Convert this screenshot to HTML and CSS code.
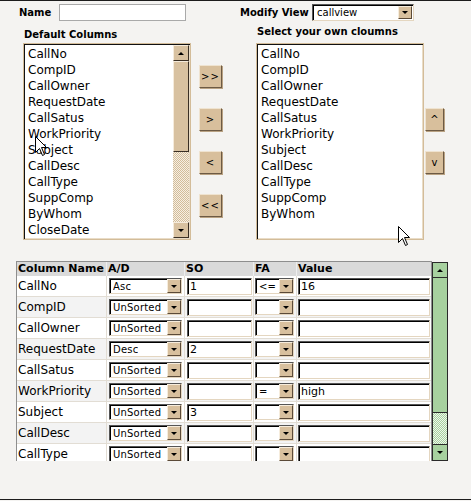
FILE: index.html
```html
<!DOCTYPE html>
<html lang="en">
<head>
  <meta charset="UTF-8">
  <title>Modify View</title>
  <link rel="stylesheet" href="styles.css">
</head>
<body>
<div class="frame">

  <!-- name + view picker -->
  <div class="topbar">
    <span class="lbl name-lbl">Name</span>
    <input class="name-field" type="text">
    <span class="lbl view-lbl">Modify View</span>
    <div class="combo"><span>callview</span><i class="drop"><b class="tri-down"></b></i></div>
  </div>

  <!-- column pickers -->
  <div class="pickers">
    <div class="picker">
      <div class="lbl plabel">Default Columns</div>
      <div class="listbox">
        <ul class="items">
          <li>CallNo</li><li>CompID</li><li>CallOwner</li><li>RequestDate</li>
          <li>CallSatus</li><li>WorkPriority</li><li>Subject</li><li>CallDesc</li>
          <li>CallType</li><li>SuppComp</li><li>ByWhom</li><li>CloseDate</li>
        </ul>
        <div class="vscroll">
          <div class="sbtn"><b class="tri-up"></b></div>
          <div class="thumb"></div>
          <div class="track"></div>
          <div class="sbtn"><b class="tri-down"></b></div>
        </div>
      </div>
    </div>

    <div class="movebtns">
      <button class="tbtn">&gt;&gt;</button>
      <button class="tbtn">&gt;</button>
      <button class="tbtn">&lt;</button>
      <button class="tbtn">&lt;&lt;</button>
    </div>

    <div class="picker own">
      <div class="lbl plabel">Select your own cloumns</div>
      <div class="listbox">
        <ul class="items">
          <li>CallNo</li><li>CompID</li><li>CallOwner</li><li>RequestDate</li>
          <li>CallSatus</li><li>WorkPriority</li><li>Subject</li><li>CallDesc</li>
          <li>CallType</li><li>SuppComp</li><li>ByWhom</li>
        </ul>
      </div>
    </div>

    <div class="orderbtns">
      <button class="tbtn small">^</button>
      <button class="tbtn small">v</button>
    </div>
  </div>

  <!-- sort / filter grid -->
  <div class="grid-wrap">
    <div class="grid-clip">
      <div class="grid">
        <div class="hd">Column Name</div><div class="hd">A/D</div><div class="hd">SO</div><div class="hd">FA</div><div class="hd last">Value</div>

        <div class="c name">CallNo</div>
        <div class="c ad"><div class="sel"><span>Asc</span><i class="drop"><b class="tri-down"></b></i></div></div>
        <div class="c so"><div class="inp">1</div></div>
        <div class="c fa"><div class="sel"><span>&lt;=</span><i class="drop"><b class="tri-down"></b></i></div></div>
        <div class="c val last"><div class="inp">16</div></div>

        <div class="c name alt">CompID</div>
        <div class="c ad alt"><div class="sel"><span>UnSorted</span><i class="drop"><b class="tri-down"></b></i></div></div>
        <div class="c so alt"><div class="inp"></div></div>
        <div class="c fa alt"><div class="sel"><span></span><i class="drop"><b class="tri-down"></b></i></div></div>
        <div class="c val alt last"><div class="inp"></div></div>

        <div class="c name">CallOwner</div>
        <div class="c ad"><div class="sel"><span>UnSorted</span><i class="drop"><b class="tri-down"></b></i></div></div>
        <div class="c so"><div class="inp"></div></div>
        <div class="c fa"><div class="sel"><span></span><i class="drop"><b class="tri-down"></b></i></div></div>
        <div class="c val last"><div class="inp"></div></div>

        <div class="c name alt">RequestDate</div>
        <div class="c ad alt"><div class="sel"><span>Desc</span><i class="drop"><b class="tri-down"></b></i></div></div>
        <div class="c so alt"><div class="inp">2</div></div>
        <div class="c fa alt"><div class="sel"><span></span><i class="drop"><b class="tri-down"></b></i></div></div>
        <div class="c val alt last"><div class="inp"></div></div>

        <div class="c name">CallSatus</div>
        <div class="c ad"><div class="sel"><span>UnSorted</span><i class="drop"><b class="tri-down"></b></i></div></div>
        <div class="c so"><div class="inp"></div></div>
        <div class="c fa"><div class="sel"><span></span><i class="drop"><b class="tri-down"></b></i></div></div>
        <div class="c val last"><div class="inp"></div></div>

        <div class="c name alt">WorkPriority</div>
        <div class="c ad alt"><div class="sel"><span>UnSorted</span><i class="drop"><b class="tri-down"></b></i></div></div>
        <div class="c so alt"><div class="inp"></div></div>
        <div class="c fa alt"><div class="sel"><span>=</span><i class="drop"><b class="tri-down"></b></i></div></div>
        <div class="c val alt last"><div class="inp">high</div></div>

        <div class="c name">Subject</div>
        <div class="c ad"><div class="sel"><span>UnSorted</span><i class="drop"><b class="tri-down"></b></i></div></div>
        <div class="c so"><div class="inp">3</div></div>
        <div class="c fa"><div class="sel"><span></span><i class="drop"><b class="tri-down"></b></i></div></div>
        <div class="c val last"><div class="inp"></div></div>

        <div class="c name alt">CallDesc</div>
        <div class="c ad alt"><div class="sel"><span>UnSorted</span><i class="drop"><b class="tri-down"></b></i></div></div>
        <div class="c so alt"><div class="inp"></div></div>
        <div class="c fa alt"><div class="sel"><span></span><i class="drop"><b class="tri-down"></b></i></div></div>
        <div class="c val alt last"><div class="inp"></div></div>

        <div class="c name">CallType</div>
        <div class="c ad"><div class="sel"><span>UnSorted</span><i class="drop"><b class="tri-down"></b></i></div></div>
        <div class="c so"><div class="inp"></div></div>
        <div class="c fa"><div class="sel"><span></span><i class="drop"><b class="tri-down"></b></i></div></div>
        <div class="c val last"><div class="inp"></div></div>
      </div>
    </div>
    <div class="gscroll">
      <div class="gbtn"><b class="tri-up"></b></div>
      <div class="gthumb"></div>
      <div class="gtrack"></div>
      <div class="gbtn down"><b class="tri-down"></b></div>
    </div>
  </div>

  <!-- mouse pointers caught in the shot -->
  <svg class="cursor cur-left" width="13" height="21" viewBox="0 0 13 21"><path d="M0.5 0.5 L0.5 16.5 L4.5 12.5 L7.5 19.5 L9.5 18.5 L6.5 11.5 L11.5 11.5 Z" fill="#fff" stroke="#000"/></svg>
  <svg class="cursor cur-right" width="13" height="21" viewBox="0 0 13 21"><path d="M0.5 0.5 L0.5 16.5 L4.5 12.5 L7.5 19.5 L9.5 18.5 L6.5 11.5 L11.5 11.5 Z" fill="#fff" stroke="#000"/></svg>
</div>
</body>
</html>
```

FILE: styles.css
```css
* {
  box-sizing: border-box;
}

body {
  margin: 0;
  background: #f4f3f1;
  font-family: "DejaVu Sans", Verdana, sans-serif;
  color: #000;
}

.frame {
  position: relative;
  height: 500px;
  border-top: 1px solid #1c1c1c;
  border-bottom: 1px solid #1c1c1c;
}

.lbl {
  font-size: 10px;
  font-weight: bold;
}

/* top row */
.topbar {
  display: flex;
  align-items: center;
  height: 17px;
  margin-top: 3px;
  padding-left: 19px;
}

.name-lbl {
  width: 40px;
}

.name-field {
  width: 127px;
  height: 17px;
  margin: 0;
  padding: 0;
  border: 1px solid #a9a9a9;
  background: #fff;
}

.view-lbl {
  width: 72px;
  margin-left: 54px;
}

.combo {
  display: flex;
  align-items: center;
  justify-content: space-between;
  width: 102px;
  height: 17px;
  padding: 0 1px 0 4px;
  background: #fff;
  border: 1px solid;
  border-color: #555 #e4d6c0 #e4d6c0 #555;
  box-shadow: inset 1px 1px 0 #000;
  font-size: 10px;
}

/* small triangles */
.tri-down, .tri-up {
  display: block;
  width: 0;
  height: 0;
  border-left: 3px solid transparent;
  border-right: 3px solid transparent;
}

.tri-down {
  border-top: 3px solid #000;
}

.tri-up {
  border-bottom: 3px solid #000;
}

.drop {
  display: flex;
  flex-shrink: 0;
  align-items: center;
  justify-content: center;
  width: 14px;
  height: 13px;
  background: #d8c09e;
  border: 1px solid;
  border-color: #f6ecdc #5b4a38 #5b4a38 #f6ecdc;
}

/* pickers */
.pickers {
  display: flex;
  align-items: flex-start;
  margin-top: 4px;
  padding-left: 23px;
}

.plabel {
  height: 18px;
  padding-top: 4px;
  padding-left: 1px;
}

.own .plabel {
  padding-top: 1px;
}

.listbox {
  display: flex;
  width: 168px;
  height: 197px;
  padding: 1px;
  background: #fff;
  border: 1px solid #d3bc99;
  box-shadow: inset 1px 1px 0 #111, inset -1px -1px 0 #e9dcc7;
}

.items {
  flex: 1;
  margin: 0;
  padding: 1px 0 0 3px;
  list-style: none;
  font-size: 12px;
  line-height: 16px;
  overflow: hidden;
}

.vscroll {
  display: flex;
  flex-direction: column;
  width: 16px;
}

.sbtn, .thumb {
  display: flex;
  align-items: center;
  justify-content: center;
  background: #d8c1a0;
  border: 1px solid;
  border-color: #f5ebdc #3a2f24 #3a2f24 #f5ebdc;
}

.sbtn {
  height: 16px;
}

.thumb {
  height: 91px;
}

.track {
  flex: 1;
  background: repeating-conic-gradient(#d3bc99 0 25%, #f6efe3 0 50%) 0 0 / 2px 2px;
}

.movebtns, .orderbtns {
  display: flex;
  flex-direction: column;
  gap: 20px;
}

.movebtns {
  margin: 40px 0 0 8px;
}

.tbtn {
  width: 23px;
  height: 23px;
  margin: 0;
  padding: 0;
  background: #d8bf9c;
  border: 1px solid;
  border-color: #efe3d0 #6d5a44 #6d5a44 #efe3d0;
  box-shadow: 1px 1px 0 #b9a283;
  font-family: "DejaVu Sans", Verdana, sans-serif;
  font-size: 10px;
  color: #000;
  letter-spacing: 1px;
}

.own {
  margin-left: 34px;
}

.orderbtns {
  margin: 83px 0 0 1px;
}

.tbtn.small {
  width: 19px;
  letter-spacing: 0;
}

/* sort / filter grid */
.grid-wrap {
  display: flex;
  margin: 21px 0 0 16px;
}

.grid-clip {
  width: 416px;
  height: 200px;
  overflow: hidden;
  background: #fff;
  border: 1px solid #8e8e8e;
  border-bottom: 0;
}

.grid {
  display: grid;
  grid-template-columns: 90px 78px 69px 43px 134px;
  grid-template-rows: 14px;
  grid-auto-rows: 21px;
}

.hd {
  padding-left: 1px;
  background: #dadada;
  border-right: 1px solid #eeeeee;
  font-size: 11px;
  font-weight: bold;
  line-height: 14px;
}

.c {
  display: flex;
  align-items: center;
  background: #fff;
  border-right: 1px solid #e2ddd4;
  border-bottom: 1px solid #e2ddd4;
}

.c.alt {
  background: #f3f3f3;
}

.last {
  border-right: 0;
}

.name {
  padding-left: 1px;
  font-size: 12px;
}

.ad {
  padding-left: 2px;
}

.so {
  padding-left: 2px;
}

.fa, .val {
  padding-left: 1px;
}

.sel {
  display: flex;
  align-items: center;
  justify-content: space-between;
  height: 16px;
  padding: 0 0 0 3px;
  background: #fff;
  border: 1px solid;
  border-color: #555 #e4d6c0 #e4d6c0 #555;
  box-shadow: inset 1px 1px 0 #000;
  font-size: 10px;
  letter-spacing: 0.2px;
}

.sel span {
  overflow: hidden;
  white-space: nowrap;
}

.ad .sel {
  width: 73px;
}

.fa .sel {
  width: 39px;
}

.sel .drop {
  height: 14px;
}

.inp {
  height: 17px;
  padding-left: 2px;
  background: #fff;
  border: 1px solid;
  border-color: #555 #e4d6c0 #e4d6c0 #555;
  box-shadow: inset 1px 1px 0 #000;
  font-size: 11px;
  line-height: 15px;
}

.so .inp {
  width: 65px;
}

.val .inp {
  width: 132px;
}

.gscroll {
  display: flex;
  flex-direction: column;
  width: 16px;
  height: 199px;
  margin-top: 1px;
  border: 1px solid #2a2a2a;
}

.gbtn {
  display: flex;
  align-items: center;
  justify-content: center;
  height: 15px;
  background: #a7d19f;
  border-bottom: 1px solid #2a2a2a;
}

.gbtn.down {
  height: 16px;
  border-top: 1px solid #2a2a2a;
  border-bottom: 0;
}

.gthumb {
  height: 135px;
  background: #a7d19f;
  border-bottom: 1px solid #2a2a2a;
}

.gtrack {
  flex: 1;
  background: repeating-conic-gradient(#a7d19f 0 25%, #eef6ec 0 50%) 0 0 / 2px 2px;
}

.cursor {
  position: absolute;
}

.cur-left {
  left: 35px;
  top: 135px;
}

.cur-right {
  left: 398px;
  top: 225px;
}
```
